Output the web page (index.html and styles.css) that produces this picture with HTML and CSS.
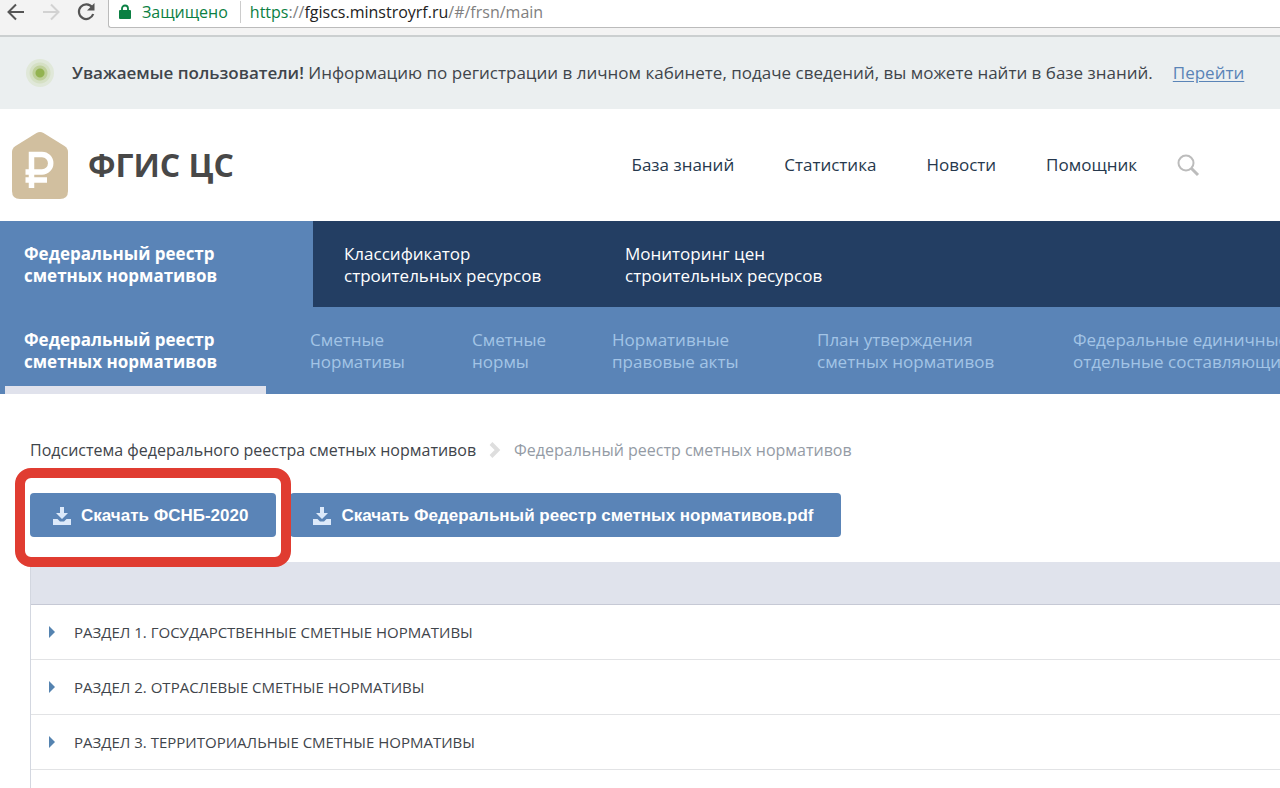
FILE: index.html
```html
<!DOCTYPE html>
<html lang="ru">
<head>
<meta charset="utf-8">
<meta name="viewport" content="width=device-width, initial-scale=1">
<title>ФГИС ЦС</title>
<link rel="stylesheet" href="styles.css">
</head>
<body>
<div class="browser">
  <div class="browser-buttons">
    <button class="icon-button" type="button" aria-label="Назад"><svg width="20" height="20" viewBox="0 0 20 20" fill="none" stroke="#555" stroke-width="2"><path d="M18 10H3M10 2.500L2.500 10L10 17.500"/></svg></button>
    <button class="icon-button" type="button" aria-label="Вперёд"><svg width="20" height="20" viewBox="0 0 20 20" fill="none" stroke="#d2d2d2" stroke-width="2"><path d="M2 10H17M10 2.500L17.500 10L10 17.500"/></svg></button>
    <button class="icon-button" type="button" aria-label="Обновить"><svg width="20" height="20" viewBox="0 0 20 20" fill="none" stroke="#555" stroke-width="2.200"><path d="M16.200 5.500A7.300 7.300 0 1 0 17.200 12"/><path d="M18.500 1V8.500H11Z" fill="#555" stroke="none"/></svg></button>
  </div>
  <div class="address">
    <svg class="lock" width="12" height="16" viewBox="0 0 12 16"><rect y="6" width="12" height="9" rx="1" fill="#0b8043"/><path d="M3 7V4.500a3 3 0 0 1 6 0V7" fill="none" stroke="#0b8043" stroke-width="1.800"/></svg>
    <span class="secure">Защищено</span>
    <span class="url"><span class="scheme">https</span>://<span class="host">fgiscs.minstroyrf.ru</span>/#/frsn/main</span>
  </div>
</div>
<div class="notice">
  <span class="pulse"></span>
  <p class="notice-text"><strong>Уважаемые пользователи!</strong> Информацию по регистрации в личном кабинете, подаче сведений, вы можете найти в базе знаний.</p>
  <a class="notice-link" href="#">Перейти</a>
</div>
<header class="header">
  <a class="brand" href="#">
    <svg width="56" height="67" viewBox="0 0 56 67"><path d="M24.500 1Q28 -1 31.500 1L52.500 14Q56 16.300 56 20V59Q56 67 48 67H8Q0 67 0 59V20Q0 16.300 3.500 14Z" fill="#d1bf9f"/><path d="M19.500 56V22.500H30a8.700 8.700 0 0 1 0 17.400H13.500M13.500 48H35" fill="none" stroke="#fff" stroke-width="5.500"/></svg>
    <span class="brand-name">ФГИС ЦС</span>
  </a>
  <nav class="top-links">
    <a href="#">База знаний</a>
    <a href="#">Статистика</a>
    <a href="#">Новости</a>
    <a href="#">Помощник</a>
  </nav>
  <button class="icon-button search" type="button" aria-label="Поиск"><svg width="24" height="24" viewBox="0 0 24 24" fill="none" stroke="#bcbcbc"><circle cx="10" cy="10" r="7.500" stroke-width="2"/><path d="M15.500 15.500L22 22" stroke-width="3"/></svg></button>
</header>
<nav class="main-nav">
  <a class="current" href="#">Федеральный реестр<br>сметных нормативов</a>
  <a href="#">Классификатор<br>строительных ресурсов</a>
  <a href="#">Мониторинг цен<br>строительных ресурсов</a>
</nav>
<nav class="sub-nav">
  <a class="current" href="#">Федеральный реестр<br>сметных нормативов</a>
  <a href="#">Сметные<br>нормативы</a>
  <a href="#">Сметные<br>нормы</a>
  <a href="#">Нормативные<br>правовые акты</a>
  <a href="#">План утверждения<br>сметных нормативов</a>
  <a href="#">Федеральные единичные<br>отдельные составляющие</a>
</nav>
<main class="content">
  <div class="breadcrumbs">
    <a href="#">Подсистема федерального реестра сметных нормативов</a>
    <svg width="12" height="16" viewBox="0 0 12 16" fill="none" stroke="#dedede" stroke-width="4"><path d="M2 1.500L8.500 8L2 14.500"/></svg>
    <span>Федеральный реестр сметных нормативов</span>
  </div>
  <div class="downloads">
    <div class="highlighted">
      <button class="download" type="button"><svg width="18" height="18" viewBox="0 0 18 18" fill="#dce9fa"><path d="M7 0H11V6H15L9 12L3 6H7ZM0 12H4.500L7 14.500H11L13.500 12H18V18H0Z"/></svg>Скачать ФСНБ-2020</button>
      <span class="highlight-frame"></span>
    </div>
    <button class="download" type="button"><svg width="18" height="18" viewBox="0 0 18 18" fill="#dce9fa"><path d="M7 0H11V6H15L9 12L3 6H7ZM0 12H4.500L7 14.500H11L13.500 12H18V18H0Z"/></svg>Скачать Федеральный реестр сметных нормативов.pdf</button>
  </div>
  <div class="registry">
    <div class="registry-head"></div>
    <button class="section" type="button"><span class="arrow"></span>РАЗДЕЛ 1. ГОСУДАРСТВЕННЫЕ СМЕТНЫЕ НОРМАТИВЫ</button>
    <button class="section" type="button"><span class="arrow"></span>РАЗДЕЛ 2. ОТРАСЛЕВЫЕ СМЕТНЫЕ НОРМАТИВЫ</button>
    <button class="section" type="button"><span class="arrow"></span>РАЗДЕЛ 3. ТЕРРИТОРИАЛЬНЫЕ СМЕТНЫЕ НОРМАТИВЫ</button>
    <div class="registry-rest"></div>
  </div>
</main>
</body>
</html>
```
FILE: styles.css
```css
* { box-sizing: border-box; }
body {
  margin: 0;
  overflow: hidden;
  background: #fff;
  color: #3f454b;
  font-family: "Open Sans", "Noto Sans", sans-serif;
  font-size: 17px;
}
a { color: inherit; text-decoration: none; }
button { font: inherit; color: inherit; border: 0; background: none; padding: 0; cursor: pointer; }
svg { display: block; flex: none; }

.browser {
  display: flex;
  height: 37px;
  padding-bottom: 7px;
  background: #f3f3f3;
  border-bottom: 2px solid #cbcfd0;
}
.browser-buttons { display: flex; flex: none; width: 108px; height: 24px; align-items: center; gap: 15px; padding-left: 6px; }
.address {
  display: flex;
  flex: 1;
  align-items: center;
  padding: 0 10px 4px;
  background: #fff;
  border: 1px solid #bbb;
  border-width: 0 0 1px 1px;
  border-bottom-left-radius: 3px;
  font-size: 16px;
  white-space: nowrap;
  line-height: 22px;
}
.secure { margin-left: 11px; padding-right: 12px; border-right: 1px solid #ccc; color: #0b8043; }
.url { margin-left: 9px; color: #808080; }
.scheme { color: #0b8043; }
.host { color: #222; }

.notice {
  display: flex;
  align-items: center;
  height: 72px;
  padding-left: 26px;
  background: #ebeff0;
  white-space: nowrap;
}
.pulse {
  flex: none;
  width: 28px;
  height: 28px;
  margin-right: 18px;
  border-radius: 50%;
  background: radial-gradient(circle, #93b351 0 4px, #bfd09a 5px 7px, #d5e0c4 8px 10px, #e0e8d9 11px 14px);
}
.notice-text { margin: 0; padding-bottom: 2px; }
.notice-text strong { font-weight: 600; }
.notice-link { margin-left: 20px; padding-bottom: 2px; color: #5a84b7; text-decoration: underline; text-underline-offset: 2px; }

.header { display: flex; align-items: center; height: 112px; padding: 0 80px 0 12px; }
.brand { display: flex; align-items: center; gap: 20px; }
.brand-name { color: #484848; font-size: 32px; font-weight: 700; line-height: 44px; }
.top-links { display: flex; gap: 50px; margin-left: auto; padding-bottom: 2px; color: #26384d; white-space: nowrap; }
.search { margin-left: 39px; }

.main-nav, .sub-nav { display: grid; line-height: 22px; white-space: nowrap; color: #fff; }
.main-nav { grid-template-columns: 313px 281px auto; height: 86px; background: #233e63; }
.main-nav a { padding: 22px 31px 0; }
.main-nav .current { padding-left: 24px; background: #5a84b7; }
.sub-nav {
  grid-template-columns: 305px 162px 140px 205px 256px auto;
  height: 87px;
  padding-left: 5px;
  background: #5a84b7;
  color: #a3c4e6;
}
.sub-nav a { padding-top: 22px; }
.main-nav .current, .sub-nav .current { color: #fff; font-weight: 700; }
.sub-nav .current { width: 261px; padding-left: 19px; border-bottom: 8px solid #e0e2ec; }

.content { padding: 44px 0 0 30px; }
.breadcrumbs { display: flex; align-items: center; gap: 13px; height: 24px; font-size: 16px; white-space: nowrap; }
.breadcrumbs span { color: #949ba5; }
.downloads { display: flex; gap: 14px; margin: 31px 0 25px; }
.highlighted { position: relative; }
.highlight-frame {
  position: absolute;
  inset: -25px -15px -30px;
  border: 10px solid #e03c31;
  border-radius: 16px;
  pointer-events: none;
}
.download {
  display: flex;
  align-items: center;
  gap: 10px;
  height: 44px;
  padding: 2px 28px 0 23px;
  border-radius: 4px;
  background: #5a84b7;
  color: #fff;
  font-family: "Liberation Sans", Arial, sans-serif;
  font-size: 17px;
  font-weight: 700;
  white-space: nowrap;
}
.registry { border-left: 1px solid #d3d7e0; }
.registry-head { height: 43px; background: #e0e3ec; border-bottom: 1px solid #c6c9d5; }
.section {
  display: flex;
  align-items: center;
  width: 100%;
  height: 55px;
  padding-left: 18px;
  border-bottom: 1px solid #e2e3e5;
  font-size: 15px;
  white-space: nowrap;
}
.arrow { margin-right: 19px; border: 6px solid transparent; border-right: 0; border-left: 6px solid #5583b0; }
.registry-rest { height: 55px; }
```
